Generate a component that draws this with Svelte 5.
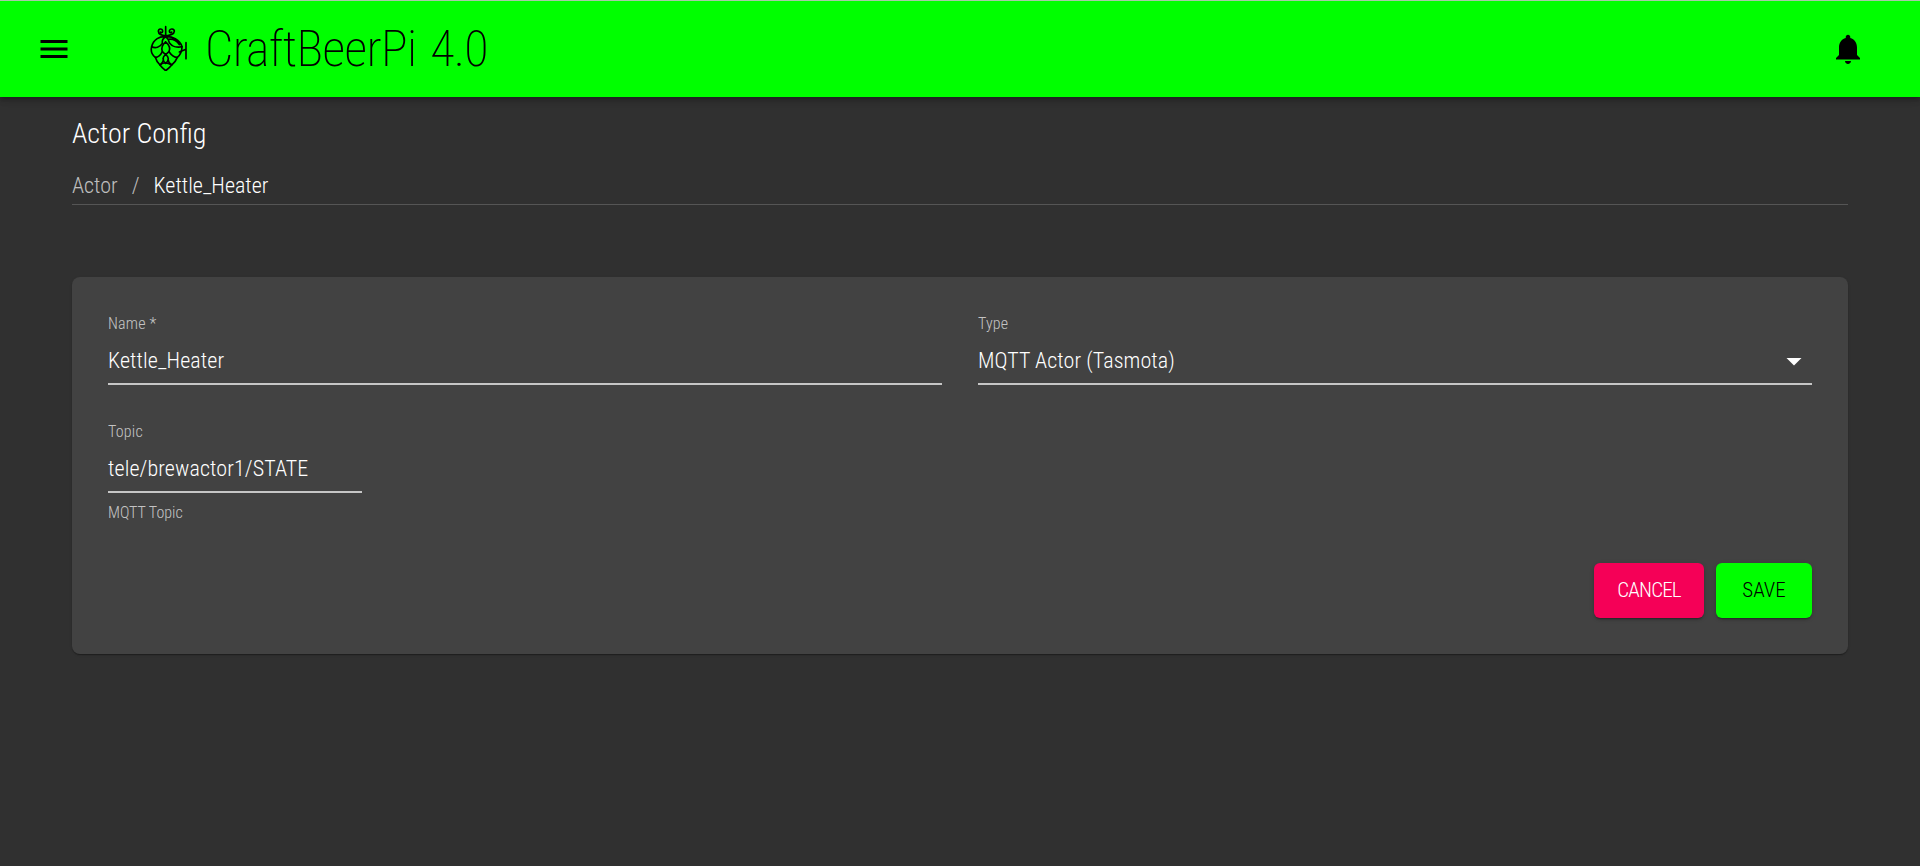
<script>
  const name = 'Kettle_Heater';
</script>

<div class="page">
  <header class="bar">
    <button class="menu" aria-label="menu">
      <svg viewBox="0 0 24 24" width="36" height="36"><path d="M3 18h18v-2H3v2zm0-5h18v-2H3v2zm0-7v2h18V6H3z"/></svg>
    </button>
    <svg class="hop" viewBox="60 45 120 140" width="40" height="46.67" fill="none" stroke="#000" stroke-width="5" stroke-linejoin="round" stroke-linecap="round">
      <path d="M107 50V78M107 76C95 78 85 72 85 64C85 56 97 54 98 63C98 69 92 69 91 66M107 76C120 78 133 72 133 64C133 56 120 54 118 63C118 69 124 69 125 66"/>
      <path d="M107 80C90 78 70 88 65 110C76 116 90 112 97 100C95 90 100 84 107 80M107 80C125 78 150 88 156 110C140 114 125 108 118 98C116 90 112 84 107 80M115 88C128 86 140 92 148 104"/>
      <path d="M107 96C98 104 93 115 97 125L107 134L117 125C122 115 116 104 107 96"/>
      <path d="M65 110C62 122 66 135 76 142C85 142 92 135 97 125M156 110C156 125 150 135 142 142C132 142 124 135 117 125"/>
      <path d="M76 142C78 150 85 160 90 165C96 160 101 152 100 145M107 134C98 140 95 150 107 160C119 150 116 140 107 134M142 142C138 152 132 160 125 165C118 160 114 155 114 148"/>
      <path d="M90 165C95 172 102 178 107 182C112 178 120 172 125 165C118 160 112 158 107 160C102 158 95 160 90 165"/>
      <path d="M148 126L168 118M168 98V146"/>
    </svg>
    <span class="brand">CraftBeerPi 4.0</span>
    <div class="spacer"></div>
    <button class="bell" aria-label="notifications">
      <svg viewBox="0 0 24 24" width="36" height="36"><path d="M12 22c1.100 0 2-.9 2-2h-4c0 1.100.89 2 2 2zm6-6v-5c0-3.070-1.640-5.640-4.500-6.320V4c0-.83-.67-1.500-1.500-1.500s-1.500.67-1.500 1.500v.68C7.630 5.360 6 7.920 6 11v5l-2 2v1h16v-1l-2-2z"/></svg>
    </button>
  </header>

  <main class="content">
    <h1>Actor Config</h1>
    <nav class="crumbs">
      <span class="muted">Actor</span><span class="sep">/</span><span>{name}</span>
    </nav>
    <hr />

    <section class="card">
      <div class="row">
        <div class="field grow">
          <span class="label">Name *</span>
          <div class="value">{name}</div>
        </div>
        <div class="field grow">
          <span class="label">Type</span>
          <div class="value select">
            MQTT Actor (Tasmota)
            <svg viewBox="0 0 24 24" width="36" height="36"><path d="M7 10l5 5 5-5z" fill="#fff"/></svg>
          </div>
        </div>
      </div>
      <div class="field topic">
        <span class="label">Topic</span>
        <div class="value">tele/brewactor1/STATE</div>
        <span class="help">MQTT Topic</span>
      </div>
      <div class="actions">
        <button class="btn cancel">CANCEL</button>
        <button class="btn save">SAVE</button>
      </div>
    </section>
  </main>
</div>

<style>
  :global(body) {
    margin: 0;
    background: #303030;
  }
  .page {
    min-height: 866px;
    background: #303030;
    color: #fff;
    font-family: "Roboto", "Liberation Sans", sans-serif;
    font-weight: 300;
    font-stretch: 75%;
    box-sizing: border-box;
  }
  .bar {
    height: 97px;
    box-sizing: border-box;
    border-top: 1px solid #a8c8a8;
    background: #00ff00;
    color: #000;
    display: flex;
    align-items: center;
    padding: 0 54px 0 36px;
    box-shadow: 0 2px 4px -1px rgba(0,0,0,.2), 0 4px 5px rgba(0,0,0,.14), 0 1px 10px rgba(0,0,0,.12);
    position: relative;
  }
  button { font: inherit; font-stretch: 75%; border: 0; background: none; padding: 0; color: inherit; }
  .menu, .bell { display: flex; }
  .menu svg, .bell svg { display: block; }
  .hop { margin-left: 78px; margin-top: -2px; }
  .brand {
    margin-left: 15px;
    font-size: 50px;
    font-weight: 200;
    letter-spacing: -.7px;
    word-spacing: 3.5px;
    white-space: nowrap;
  }
  .spacer { flex: 1; }
  .content {
    padding: 0 72px;
  }
  h1 {
    margin: 0;
    padding-top: 21px;
    font-size: 28px;
    line-height: 32px;
    font-weight: 300;
  }
  .crumbs {
    margin-top: 22px;
    font-size: 22px;
    line-height: 28px;
    display: flex;
    align-items: center;
  }
  .muted { color: rgba(255,255,255,.7); }
  .sep { color: rgba(255,255,255,.7); margin: 0 14px; }
  hr {
    margin: 4px 0 0;
    border: 0;
    border-top: 1px solid rgba(255,255,255,.18);
  }
  .card {
    margin-top: 72px;
    height: 377px;
    box-sizing: border-box;
    background: #424242;
    border-radius: 8px;
    padding: 36px;
    display: flex;
    flex-direction: column;
    box-shadow: 0 2px 1px -1px rgba(0,0,0,.2), 0 1px 1px rgba(0,0,0,.14), 0 1px 3px rgba(0,0,0,.12);
  }
  .row { display: flex; gap: 36px; }
  .grow { flex: 1; }
  .field { display: flex; flex-direction: column; }
  .label {
    font-size: 16px;
    line-height: 22px;
    letter-spacing: .2px;
    color: rgba(255,255,255,.7);
  }
  .value {
    height: 50px;
    padding-top: 3px;
    line-height: 45px;
    font-size: 22px;
    letter-spacing: .1px;
    box-sizing: border-box;
    border-bottom: 2px solid rgba(255,255,255,.7);
    white-space: nowrap;
  }
  .select { display: flex; justify-content: space-between; align-items: center; }
  .topic { width: 254px; margin-top: 36px; }
  .help {
    margin-top: 11px;
    font-size: 16px;
    line-height: 18px;
    color: rgba(255,255,255,.7);
  }
  .actions {
    margin-top: auto;
    display: flex;
    justify-content: flex-end;
    gap: 12px;
  }
  .btn {
    height: 55px;
    padding-bottom: 2px;
    border-radius: 6px;
    font-size: 21px;
    box-shadow: 0 3px 1px -2px rgba(0,0,0,.2), 0 2px 2px rgba(0,0,0,.14), 0 1px 5px rgba(0,0,0,.12);
  }
  .cancel { width: 110px; background: #f50057; color: #fff; letter-spacing: -.8px; }
  .save { width: 96px; background: #00ff00; color: #000; }
</style>
